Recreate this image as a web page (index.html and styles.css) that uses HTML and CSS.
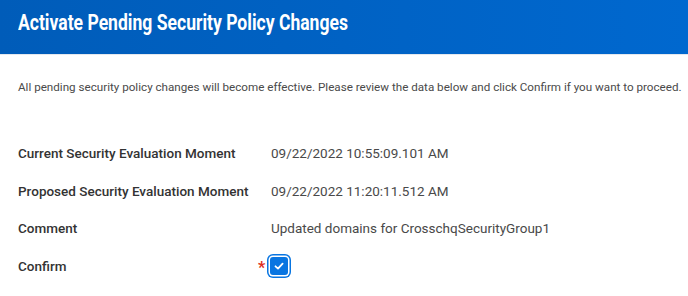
FILE: index.html
```html
<!DOCTYPE html>
<html lang="en">
<head>
    <meta charset="UTF-8">
    <title>Activate Pending Security Policy Changes</title>
    <link rel="stylesheet" href="styles.css">
</head>
<body>

<div class="page-header">
    <h1>Activate Pending Security Policy Changes</h1>
</div>

<div class="content">
    <p class="intro">All pending security policy changes will become effective. Please review the data below and click Confirm if you want to proceed.</p>

    <div class="fields">
        <div class="field-label">Current Security Evaluation Moment</div>
        <div class="field-value">09/22/2022 10:55:09.101 AM</div>

        <div class="field-label">Proposed Security Evaluation Moment</div>
        <div class="field-value">09/22/2022 11:20:11.512 AM</div>

        <div class="field-label">Comment</div>
        <div class="field-value">Updated domains for CrosschqSecurityGroup1</div>

        <div class="field-label">Confirm</div>
        <div class="field-value">
            <span class="required">*</span>
            <span class="checkbox checked">
                <svg width="12" height="12" viewBox="0 0 12 12">
                    <path d="M2.5 6.3 L5 8.6 L9.6 3.6" fill="none" stroke="#fff" stroke-width="1.8" stroke-linecap="round" stroke-linejoin="round"/>
                </svg>
            </span>
        </div>
    </div>
</div>

</body>
</html>
```

FILE: styles.css
```css
body {
    margin: 0;
    font-family: 'Roboto', 'Liberation Sans', sans-serif;
    background-color: #fff;
    color: #333;
}

.page-header {
    height: 45px;
    padding: 9px 0 0 18px;
    background: linear-gradient(to right, #005cb9, #0068cf);
    border-bottom: 1px solid #e4e8ee;
}

.page-header h1 {
    margin: 0;
    color: #fff;
    font-size: 22.5px;
    line-height: 26px;
    font-weight: 700;
    white-space: nowrap;
    transform: scaleX(0.78);
    transform-origin: left center;
}

.content {
    padding: 0 18px;
}

.intro {
    margin: 25px 0 0;
    font-size: 11.65px;
    color: #4a4a4a;
    line-height: 14px;
    white-space: nowrap;
}

.fields {
    display: grid;
    grid-template-columns: 253px 1fr;
    grid-auto-rows: 37.7px;
    align-items: center;
    margin-top: 40px;
}

.field-label {
    font-size: 13.5px;
    font-weight: 500;
    color: #333;
}

.field-value {
    font-size: 13.5px;
    color: #494949;
    position: relative;
    display: flex;
    align-items: center;
}

.required {
    position: absolute;
    left: -13px;
    top: 1px;
    color: #de2e21;
    font-size: 16px;
    font-weight: 700;
}

.checkbox {
    width: 18px;
    height: 18px;
    margin-left: -1px;
    border-radius: 3px;
    background-color: #0875e1;
    box-shadow: 0 0 0 1.5px #fff, 0 0 0 3px #0875e1;
    display: flex;
    align-items: center;
    justify-content: center;
}
```
